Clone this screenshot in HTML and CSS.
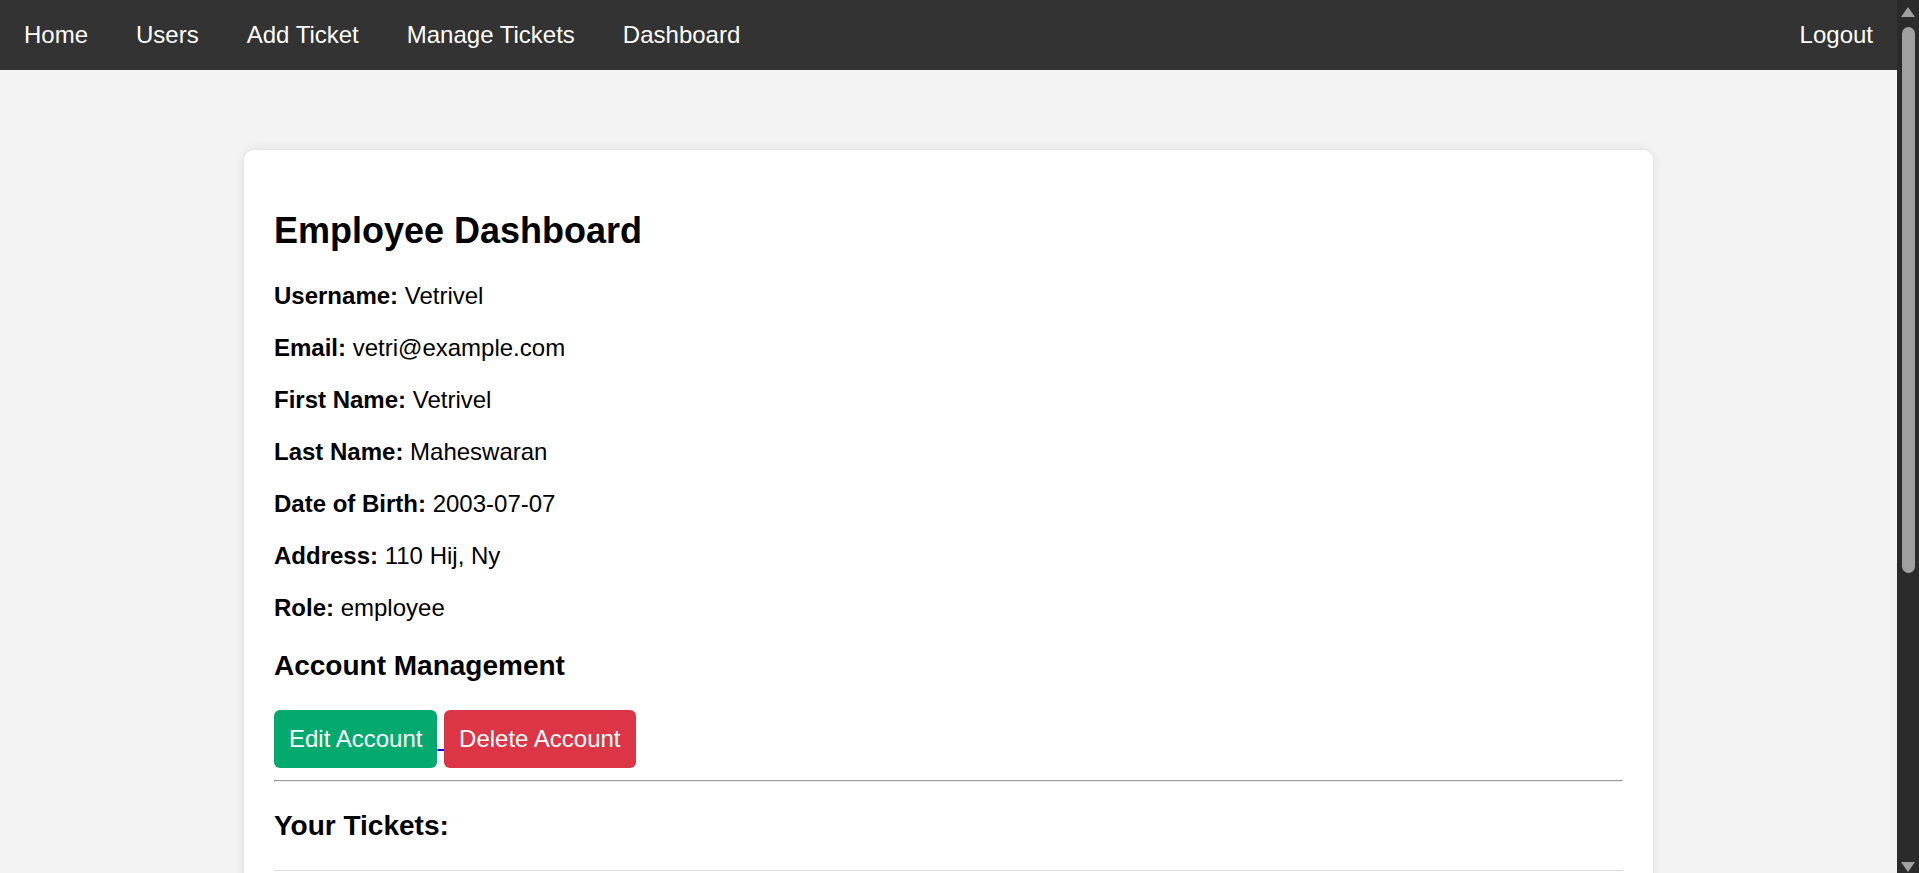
FILE: index.html
```html
<!DOCTYPE html>
<html lang="en">
<head>
<meta charset="utf-8">
<title>Employee Dashboard</title>
<link rel="stylesheet" href="styles.css">
</head>
<body>
<div class="page">
  <nav class="navbar">
    <div class="nav-left">
      <a href="#" class="nav-link">Home</a>
      <a href="#" class="nav-link">Users</a>
      <a href="#" class="nav-link">Add Ticket</a>
      <a href="#" class="nav-link">Manage Tickets</a>
      <a href="#" class="nav-link">Dashboard</a>
    </div>
    <div class="nav-right">
      <a href="#" class="nav-link">Logout</a>
    </div>
  </nav>

  <main class="card">
    <h2 class="title">Employee Dashboard</h2>
    <p class="field"><strong>Username:</strong> Vetrivel</p>
    <p class="field"><strong>Email:</strong> vetri@example.com</p>
    <p class="field"><strong>First Name:</strong> Vetrivel</p>
    <p class="field"><strong>Last Name:</strong> Maheswaran</p>
    <p class="field"><strong>Date of Birth:</strong> 2003-07-07</p>
    <p class="field"><strong>Address:</strong> 110 Hij, Ny</p>
    <p class="field"><strong>Role:</strong> employee</p>

    <h3 class="section">Account Management</h3>
    <div class="actions"><a href="#" class="edit-link"><button class="btn btn-edit">Edit Account</button> </a><button class="btn btn-delete">Delete Account</button></div>
    <hr class="divider">

    <h3 class="section">Your Tickets:</h3>
    <div class="tickets"></div>
  </main>
</div>
<div class="scrollbar" aria-hidden="true">
  <div class="arrow-up"></div>
  <div class="thumb"></div>
  <div class="arrow-down"></div>
</div>
</body>
</html>
```

FILE: styles.css
```css
html,
body {
  height: 100%;
}

body {
  margin: 0;
  display: flex;
  overflow: hidden;
  font-family: "Liberation Sans", Arial, sans-serif;
  font-size: 24px;
  color: #000;
  background: #f3f3f3;
}

.page {
  flex: 1;
  min-width: 0;
  overflow: hidden;
}

.scrollbar {
  width: 22px;
  flex: none;
  display: flex;
  flex-direction: column;
  align-items: center;
  background: #2b2b2b;
}

.arrow-up {
  width: 0;
  height: 0;
  margin-top: 7px;
  border-left: 7px solid transparent;
  border-right: 7px solid transparent;
  border-bottom: 10px solid #a0a0a0;
}

.thumb {
  width: 13px;
  height: 546px;
  margin-top: 10px;
  margin-left: 1px;
  border-radius: 7px;
  background: #a0a0a0;
}

.arrow-down {
  width: 0;
  height: 0;
  margin-top: auto;
  margin-bottom: 1px;
  border-left: 7px solid transparent;
  border-right: 7px solid transparent;
  border-top: 10px solid #a0a0a0;
}

.navbar {
  display: flex;
  justify-content: space-between;
  align-items: center;
  height: 70px;
  background: #333;
}

.nav-left,
.nav-right {
  display: flex;
  align-items: center;
}

.nav-link {
  color: #fff;
  text-decoration: none;
  padding: 0 24px;
  font-size: 24px;
}

.card {
  display: block;
  box-sizing: border-box;
  width: 1409px;
  margin: 80px auto 50px;
  padding: 30px;
  background: #fff;
  border-radius: 10px;
  box-shadow: 0 0 10px rgba(0, 0, 0, 0.1);
}

.title {
  font-size: 36px;
  margin: 30px 0;
}

.field {
  margin: 24px 0;
}

.section {
  font-size: 28px;
  margin: 28px 0;
}

.actions {
  margin: 0;
}

.edit-link {
  color: #0000ee;
}

.btn {
  font-family: inherit;
  font-size: 24px;
  color: #fff;
  border: none;
  border-radius: 6px;
  padding: 15px;
  cursor: pointer;
}

.btn-edit {
  background: #04aa6d;
}

.btn-delete {
  background: #dc3545;
}

.divider {
  margin: 12px 0;
}

.tickets {
  border-top: 1px solid #dddddd;
  height: 352px;
}
```
